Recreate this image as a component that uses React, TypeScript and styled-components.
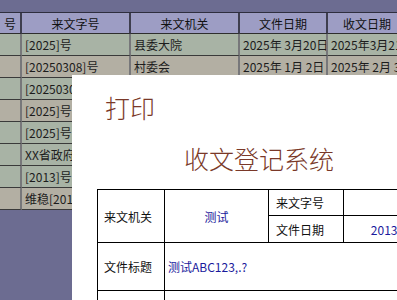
import React from "react";
import styled, { createGlobalStyle } from "styled-components";

const Global = createGlobalStyle`
  html, body { margin: 0; padding: 0; background: #6c6c91; overflow: hidden; }
  body { font-family: "Noto Sans CJK SC", "Noto Sans", sans-serif; }
`;

const Page = styled.div`
  position: relative;
  width: 397px;
  height: 300px;
  overflow: hidden;
  background: #6c6c91;
  padding-top: 12px;
  box-sizing: border-box;
`;

const Grid = styled.div`
  display: grid;
  grid-template-columns: 22px 109px 109px 88px 80px;
  width: max-content;
  border-top: 1px solid #2e2e3e;
`;

const HeadCell = styled.div`
  height: 21px;
  box-sizing: border-box;
  background: #9d9dc4;
  border-right: 2px solid #3e3e4e;
  border-bottom: 1px solid #2e2e2e;
  display: flex;
  align-items: center;
  justify-content: center;
  font-size: 12px;
  color: #111;
  white-space: nowrap;
  overflow: hidden;
`;

const Cell = styled.div<{ $tone: "g" | "t" }>`
  height: 22px;
  box-sizing: border-box;
  background: ${(p) => (p.$tone === "g" ? "#a8b3a5" : "#b3afa3")};
  border-right: 2px solid #77777a;
  border-bottom: 1px solid #3a3a3a;
  display: flex;
  align-items: center;
  padding-left: 3px;
  font-size: 12px;
  color: #1c1c1c;
  white-space: nowrap;
  overflow: hidden;
`;

const Dialog = styled.div`
  position: absolute;
  left: 72px;
  top: 75px;
  right: 0;
  bottom: 0;
  background: #ffffff;
  display: flex;
  flex-direction: column;
  align-items: flex-start;
`;

const Title = styled.div`
  margin: 20px 0 0 33px;
  font-size: 25px;
  line-height: 25px;
  font-weight: 300;
  color: #7a3828;
  white-space: nowrap;
`;

const Heading = styled.div`
  margin: 26px 0 0 112px;
  font-size: 25px;
  line-height: 25px;
  font-weight: 300;
  color: #7a3828;
  white-space: nowrap;
`;

const Form = styled.div`
  margin: 18px 0 0 25px;
  display: grid;
  grid-template-columns: 66px 103px 74px 103px;
  grid-template-rows: 25px 26px 47px 40px;
  gap: 1px;
  padding: 1px;
  background: #000;
  flex-shrink: 0;
`;

const FCell = styled.div<{
  $col?: string;
  $row?: string;
  $align?: "left" | "center";
  $blue?: boolean;
  $pad?: number;
}>`
  background: #fff;
  grid-column: ${(p) => p.$col ?? "auto"};
  grid-row: ${(p) => p.$row ?? "auto"};
  display: flex;
  align-items: center;
  justify-content: ${(p) => (p.$align === "center" ? "center" : "flex-start")};
  padding-left: ${(p) => p.$pad ?? 6}px;
  font-size: 12px;
  color: ${(p) => (p.$blue ? "#1a1a9c" : "#111")};
  white-space: nowrap;
  overflow: hidden;
`;

const heads = ["号", "来文字号", "来文机关", "文件日期", "收文日期"];

type Row = { tone: "g" | "t"; cells: string[] };
const rows: Row[] = [
  { tone: "g", cells: ["", "[2025]号", "县委大院", "2025年 3月20日", "2025年3月21日"] },
  { tone: "t", cells: ["", "[20250308]号", "村委会", "2025年 1月 2日", "2025年 2月 3日"] },
  { tone: "g", cells: ["", "[20250308]号", "", "", ""] },
  { tone: "t", cells: ["", "[2025]号", "", "", ""] },
  { tone: "g", cells: ["", "[2025]号", "", "", ""] },
  { tone: "g", cells: ["", "XX省政府[2025]号", "", "", ""] },
  { tone: "g", cells: ["", "[2013]号", "", "", ""] },
  { tone: "t", cells: ["", "维稳[2013]号", "", "", ""] },
];

export default function App() {
  return (
    <Page>
      <Global />
      <Grid>
        {heads.map((h, i) => (
          <HeadCell key={i}>{h}</HeadCell>
        ))}
        {rows.map((r, ri) =>
          r.cells.map((c, ci) => (
            <Cell key={`${ri}-${ci}`} $tone={r.tone}>
              {c}
            </Cell>
          ))
        )}
      </Grid>
      <Dialog>
        <Title>打印</Title>
        <Heading>收文登记系统</Heading>
        <Form>
          <FCell $row="1 / 3">来文机关</FCell>
          <FCell $row="1 / 3" $align="center" $blue $pad={0}>
            测试
          </FCell>
          <FCell $pad={7}>来文字号</FCell>
          <FCell />
          <FCell $pad={7}>文件日期</FCell>
          <FCell $align="center" $blue $pad={4}>
            20130315
          </FCell>
          <FCell>文件标题</FCell>
          <FCell $col="2 / 5" $blue $pad={3}>
            测试ABC123,.?
          </FCell>
          <FCell />
          <FCell $col="2 / 5" />
        </Form>
      </Dialog>
    </Page>
  );
}
